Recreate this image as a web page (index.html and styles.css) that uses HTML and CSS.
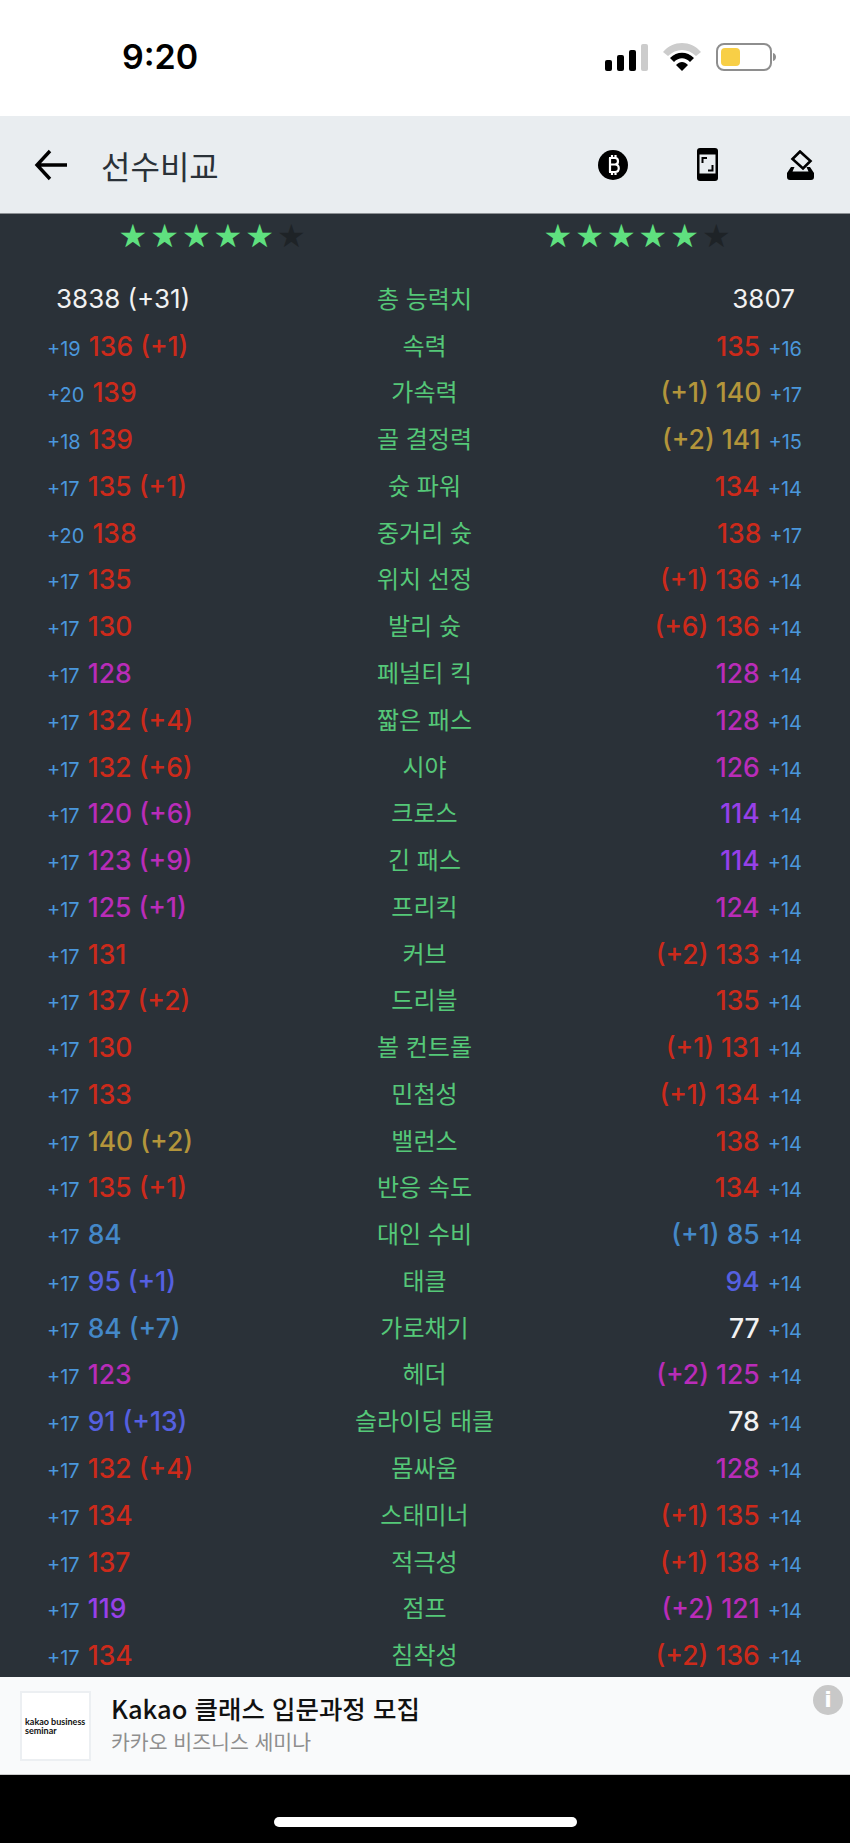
FILE: index.html
```html
<!DOCTYPE html>
<html lang="ko">

<head>
    <meta charset="UTF-8" />
    <meta name="viewport" content="width=device-width, initial-scale=1" />
    <title>선수비교</title>
    <link rel="stylesheet" href="styles.css">
</head>

<body>
    <div class="status-bar">
        <div class="clock">9:20</div>
        <div class="status-icons">
            <svg width="43" height="28" viewBox="0 0 43 28">
                <rect x="0" y="17" width="7" height="11" rx="2" fill="#000" />
                <rect x="12" y="12" width="7" height="16" rx="2" fill="#000" />
                <rect x="24" y="7" width="7" height="21" rx="2" fill="#000" />
                <rect x="36" y="1" width="7" height="27" rx="2" fill="#ccc" />
            </svg>
            <svg width="38" height="28" viewBox="0 0 38 28">
                <path d="M0 9 C10 -3 28 -3 38 9 L33 13 C25 5 13 5 5 13 Z" fill="#ccc" />
                <path d="M7 15 C14 8 24 8 31 15 L27 19 C22 14 16 14 11 19 Z" fill="#000" />
                <path d="M13 22 C17 18 21 18 25 22 L19 28 Z" fill="#000" />
            </svg>
            <svg width="61" height="28" viewBox="0 0 61 28">
                <rect x="1" y="1" width="54" height="26" rx="7" fill="none" stroke="#8e8e8e" stroke-width="2" />
                <rect x="5" y="5" width="19" height="18" rx="4" fill="#f8cf46" />
                <path d="M57 10 C61 11 61 17 57 18 Z" fill="#8e8e8e" />
            </svg>
        </div>
    </div>

    <div class="app-bar">
        <svg width="34" height="32" viewBox="0 0 34 32">
            <path d="M33 16 H3 M16 2 L3 16 L16 30" fill="none" stroke="#000" stroke-width="3.400" />
        </svg>
        <div class="app-title">선수비교</div>
        <div class="app-actions">
            <svg width="30" height="30" viewBox="0 0 30 30">
                <circle cx="15" cy="15" r="15" fill="#000" />
                <path d="M11 8 H17 C21 8 21 14.500 17 14.500 H12 M17 14.500 C22 14.500 22 22 17 22 H11 M12 8 V22 M14 5 V8 M17.500 5 V8 M14 22 V25 M17.500 22 V25" fill="none" stroke="#fff" stroke-width="2.200" />
            </svg>
            <svg width="21" height="33" viewBox="0 0 21 33">
                <rect width="21" height="33" rx="3" fill="#000" />
                <rect x="2.500" y="6.500" width="16" height="19" fill="#e9edf0" />
                <path d="M5.500 15 V10 H10 M15.500 17 V22.500 H11" fill="none" stroke="#000" stroke-width="2" />
            </svg>
            <svg width="27" height="30" viewBox="0 0 27 30">
                <path d="M13 1.500 L23.500 11 L16 18.500 L5.500 9 Z" fill="none" stroke="#000" stroke-width="2.600" />
                <path d="M4 17 H7.500 L5.500 21.500 H21.500 L19.500 17 H23 L27 23 V27 Q27 30 24 30 H3 Q0 30 0 27 V23 Z" fill="#000" />
            </svg>
        </div>
    </div>

    <div class="compare">
        <div class="stars-row">
            <div class="stars"><span>★</span><span>★</span><span>★</span><span>★</span><span>★</span><span class="off">★</span></div>
            <div class="stars"><span>★</span><span>★</span><span>★</span><span>★</span><span>★</span><span class="off">★</span></div>
        </div>
        <div class="rows" id="rows"></div>
    </div>

    <div class="ad">
        <div class="ad-logo">kakao business<br>seminar</div>
        <div class="ad-text">
            <div class="ad-title">Kakao 클래스 입문과정 모집</div>
            <div class="ad-sub">카카오 비즈니스 세미나</div>
        </div>
        <div class="ad-info">i</div>
    </div>

    <div class="home-area">
        <div class="home-bar"></div>
    </div>

    <script>
        // [name, left boost, left value, left bonus, right bonus, right value, right boost]
        const stats = [
            ["속력", 19, 136, 1, 0, 135, 16],
            ["가속력", 20, 139, 0, 1, 140, 17],
            ["골 결정력", 18, 139, 0, 2, 141, 15],
            ["슛 파워", 17, 135, 1, 0, 134, 14],
            ["중거리 슛", 20, 138, 0, 0, 138, 17],
            ["위치 선정", 17, 135, 0, 1, 136, 14],
            ["발리 슛", 17, 130, 0, 6, 136, 14],
            ["페널티 킥", 17, 128, 0, 0, 128, 14],
            ["짧은 패스", 17, 132, 4, 0, 128, 14],
            ["시야", 17, 132, 6, 0, 126, 14],
            ["크로스", 17, 120, 6, 0, 114, 14],
            ["긴 패스", 17, 123, 9, 0, 114, 14],
            ["프리킥", 17, 125, 1, 0, 124, 14],
            ["커브", 17, 131, 0, 2, 133, 14],
            ["드리블", 17, 137, 2, 0, 135, 14],
            ["볼 컨트롤", 17, 130, 0, 1, 131, 14],
            ["민첩성", 17, 133, 0, 1, 134, 14],
            ["밸런스", 17, 140, 2, 0, 138, 14],
            ["반응 속도", 17, 135, 1, 0, 134, 14],
            ["대인 수비", 17, 84, 0, 1, 85, 14],
            ["태클", 17, 95, 1, 0, 94, 14],
            ["가로채기", 17, 84, 7, 0, 77, 14],
            ["헤더", 17, 123, 0, 2, 125, 14],
            ["슬라이딩 태클", 17, 91, 13, 0, 78, 14],
            ["몸싸움", 17, 132, 4, 0, 128, 14],
            ["스태미너", 17, 134, 0, 1, 135, 14],
            ["적극성", 17, 137, 0, 1, 138, 14],
            ["점프", 17, 119, 0, 2, 121, 14],
            ["침착성", 17, 134, 0, 2, 136, 14]
        ];

        function tier(value) {
            if (value >= 140) return "gold";
            if (value >= 130) return "red";
            if (value >= 120) return "magenta";
            if (value >= 110) return "violet";
            if (value >= 90) return "indigo";
            if (value >= 80) return "blue";
            return "white";
        }

        const rows = document.getElementById("rows");

        rows.innerHTML = `
            <div class="row total">
                <div class="side left"><span>3838 (+31)</span></div>
                <div class="name">총 능력치</div>
                <div class="side right"><span>3807</span></div>
            </div>`;

        stats.forEach(s => {
            const leftBonus = s[3] ? ` (+${s[3]})` : "";
            const rightBonus = s[4] ? `(+${s[4]}) ` : "";
            rows.innerHTML += `
            <div class="row">
                <div class="side left">
                    <span class="boost">+${s[1]}</span>
                    <span class="val ${tier(s[2])}">${s[2]}${leftBonus}</span>
                </div>
                <div class="name">${s[0]}</div>
                <div class="side right">
                    <span class="val ${tier(s[5])}">${rightBonus}${s[5]}</span>
                    <span class="boost">+${s[6]}</span>
                </div>
            </div>`;
        });
    </script>
</body>

</html>
```

FILE: styles.css
```css
:root {
    --slate: #2a3138;
    --green: #55c878;
    --star: #5fe07f;
    --bar: #e9edf0;
    --kr: "Noto Sans CJK KR", "Noto Sans", sans-serif;
}

html,
body {
    margin: 0;
    padding: 0;
}

body {
    width: 850px;
    height: 1843px;
    overflow: hidden;
    font-family: "Inter", "Noto Sans CJK KR", sans-serif;
    background-color: #000;
    display: flex;
    flex-direction: column;
}

.status-bar {
    height: 116px;
    background-color: #fff;
    display: flex;
    justify-content: space-between;
    align-items: flex-start;
    padding: 0 73px 0 122px;
    box-sizing: border-box;
}

.clock {
    font-size: 34px;
    font-weight: 600;
    line-height: 42px;
    margin-top: 36px;
    color: #000;
}

.status-icons {
    display: flex;
    align-items: center;
    gap: 15px;
    margin-top: 43px;
}

.app-bar {
    height: 98px;
    background-color: var(--bar);
    border-bottom: 1px solid #8c9094;
    box-sizing: border-box;
    display: flex;
    align-items: center;
    padding: 0 36px 0 34px;
}

.app-title {
    font-family: var(--kr);
    font-size: 32px;
    color: #2a3138;
    margin-left: 33px;
}

.app-actions {
    margin-left: auto;
    display: flex;
    align-items: center;
    gap: 69px;
}

.compare {
    height: 1463px;
    background-color: var(--slate);
    overflow: hidden;
}

.stars-row {
    display: flex;
    height: 48px;
    padding-left: 117px;
}

.stars {
    flex: none;
    width: 425px;
    display: flex;
    font-family: "DejaVu Sans", sans-serif;
    font-size: 32px;
    line-height: 44px;
    color: var(--star);
}

.stars span {
    width: 31.7px;
    text-align: center;
}

.stars .off {
    color: #1e2327;
}

.rows {
    margin-top: 12px;
}

.row {
    height: 46.78px;
    display: grid;
    grid-template-columns: 1fr 1fr 1fr;
    align-items: center;
    padding: 0 48px 0 47px;
    font-size: 26.5px;
}

.name {
    text-align: center;
    font-family: var(--kr);
    color: var(--green);
    font-size: 24px;
    white-space: nowrap;
}

.side {
    display: flex;
    align-items: baseline;
    gap: 8px;
    white-space: nowrap;
    padding-top: 3px;
}

.side.right {
    justify-content: flex-end;
}

.total {
    color: #f2f2f2;
    font-size: 26px;
}

.total .left {
    padding-left: 9px;
}

.total .right {
    padding-right: 7px;
}

.boost {
    font-size: 20px;
    color: #4a97dc;
}

.val {
    font-weight: 500;
}

.val.red {
    color: #cc2a1b;
}

.val.gold {
    color: #b3953b;
}

.val.magenta {
    color: #b92cb8;
}

.val.violet {
    color: #9740e8;
}

.val.indigo {
    color: #5560e0;
}

.val.blue {
    color: #4488c8;
}

.val.white {
    color: #f2f2f2;
}

.ad {
    height: 98px;
    background-color: #f9fafb;
    border-bottom: 1px solid #ccc;
    box-sizing: border-box;
    display: flex;
    align-items: center;
    padding: 0 8px 0 20px;
    position: relative;
}

.ad-logo {
    flex: none;
    width: 71px;
    height: 70px;
    box-sizing: border-box;
    border: 2px solid #eceff2;
    background-color: #fff;
    display: flex;
    align-items: center;
    font-family: "Lato", sans-serif;
    font-weight: 700;
    font-size: 9px;
    line-height: 9px;
    padding: 0 0 0 3px;
    white-space: nowrap;
    color: #111;
}

.ad-logo br {
    display: block;
}

.ad-text {
    margin-left: 20px;
    padding-bottom: 5px;
    font-family: var(--kr);
}

.ad-title {
    font-size: 25.5px;
    line-height: 34px;
    font-weight: 500;
    color: #111;
}

.ad-sub {
    font-size: 20.5px;
    line-height: 30px;
    margin-top: 1px;
    color: #8e8e8e;
}

.ad-info {
    position: absolute;
    top: 8px;
    right: 7px;
    width: 30px;
    height: 30px;
    border-radius: 50%;
    background-color: #c8c8c8;
    color: #fff;
    font-family: "DejaVu Sans", sans-serif;
    font-weight: 700;
    font-size: 22px;
    line-height: 30px;
    text-align: center;
}

.home-area {
    flex: 1;
    background-color: #000;
    display: flex;
    justify-content: center;
    padding-top: 42px;
}

.home-bar {
    width: 303px;
    height: 10px;
    border-radius: 5px;
    background-color: #fff;
}
```
